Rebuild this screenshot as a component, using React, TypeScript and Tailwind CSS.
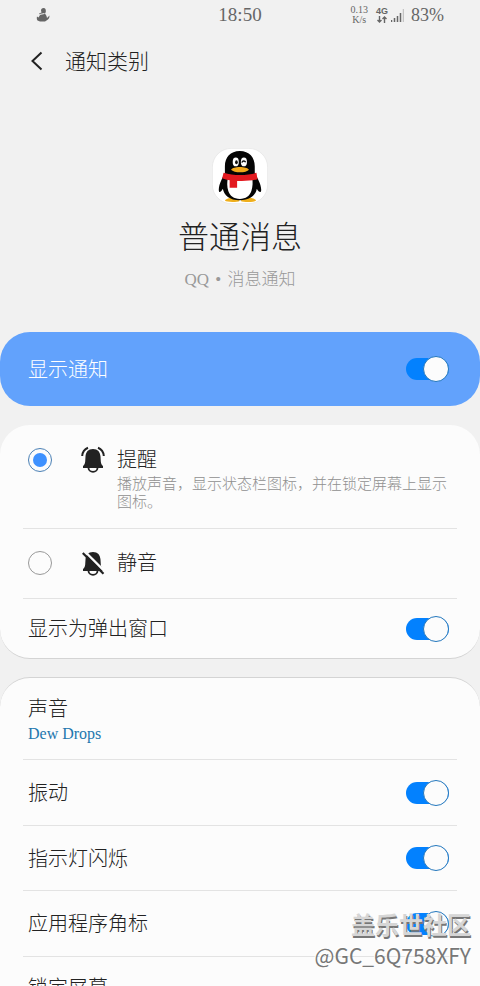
import { useId, useState } from "react";
import type { ReactNode } from "react";

function Toggle({ id }: { id: string }) {
  const [on, setOn] = useState(true);
  return (
    <input
      id={id}
      type="checkbox"
      role="switch"
      checked={on}
      onChange={() => setOn(!on)}
      className="flex h-[22px] w-[43px] shrink-0 appearance-none items-center justify-start rounded-full bg-[#b8b8b8] before:size-[26px] before:shrink-0 before:rounded-full before:border before:border-[#999] before:bg-[#fcfcfc] checked:justify-end checked:bg-[#0381fe] checked:before:border-[#2377bd]"
    />
  );
}

function SwitchRow({ label, className = "" }: { label: string; className?: string }) {
  const id = useId();
  return (
    <div className={`flex items-center justify-between px-[5px] pr-2 ${className}`}>
      <label htmlFor={id} className="pt-px text-xl leading-6">
        {label}
      </label>
      <Toggle id={id} />
    </div>
  );
}

function Radio({ id, checked, onChange }: { id: string; checked: boolean; onChange: () => void }) {
  return (
    <input
      id={id}
      type="radio"
      name="importance"
      checked={checked}
      onChange={onChange}
      className="grid size-6 shrink-0 appearance-none place-content-center rounded-full border border-[#999] before:size-[14px] before:rounded-full checked:border-[#4a80b5] checked:before:bg-[#3e91ff]"
    />
  );
}

function Card({ children, className = "" }: { children: ReactNode; className?: string }) {
  return (
    <section className={`rounded-[30px] border-[#d4d4d4] bg-[#fcfcfc] px-[23px] ${className}`}>
      {children}
    </section>
  );
}

const bellShape =
  "M12 2C7.200 2 4.800 5 4.500 9.500L4.200 14.500C4 17 3.200 18 2 19V21H22V19C20.800 18 20 17 19.800 14.500L19.500 9.500C19.200 5 16.800 2 12 2Z";

function BellRinging() {
  return (
    <svg viewBox="0 1 24 24" className="size-6 shrink-0 overflow-visible" aria-hidden="true">
      <path d={bellShape} fill="#222" />
      <path d="M7.500 21a4.500 3.800 0 0 0 9 0" fill="none" stroke="#222" strokeWidth="1.800" />
      <path
        d="M7 .8C3.500 2.200 1.500 5 1.200 9M17 .8C20.500 2.200 22.500 5 22.800 9"
        fill="none"
        stroke="#222"
        strokeWidth="2"
      />
    </svg>
  );
}

function BellOff() {
  return (
    <svg viewBox="0 1 24 24" className="size-6 shrink-0 overflow-visible" aria-hidden="true">
      <path d={bellShape} fill="#222" />
      <path d="M7.500 21a4.500 3.800 0 0 0 9 0" fill="none" stroke="#222" strokeWidth="1.800" />
      <path d="M3.800 1.500L24 21.700" stroke="#fcfcfc" strokeWidth="2.400" />
      <path d="M1.800 3L22.500 23.800" stroke="#222" strokeWidth="2.200" />
    </svg>
  );
}

function QQLogo() {
  return (
    <svg viewBox="0 0 165 165" className="size-14" role="img" aria-label="QQ">
      <rect x="1" y="1" width="163" height="163" rx="56" fill="#fff" stroke="#e3e3e3" strokeWidth="2" />
      <path d="M38 155c5-8 20-10 40-9l3 10c-4 4-38 5-43-1zM130 155c-5-8-20-10-40-9l-5 10c4 4 40 5 45-1z" fill="#efaf1c" />
      <path
        d="M82 9C54 9 38 28 38 54v19c-5 12-18 32-18 50 0 10 5 9 12-3 3 19 20 34 50 34s47-15 50-34c7 12 13 13 13 3 0-18-14-38-19-50V54C126 28 110 9 82 9z"
        fill="#050505"
      />
      <path d="M47 88h71c3 12 2 27-2 39-5 15-16 23-34 23s-29-8-34-23c-4-12-4-27-1-39z" fill="#fff" />
      <path d="M34 73c30 9 68 9 97 0l3 19c-17 5-40 6-60 5v20H52V95c-8-1-15-3-22-6z" fill="#e3191f" />
      <ellipse cx="70" cy="41" rx="9" ry="13" fill="#fff" />
      <ellipse cx="94" cy="41" rx="9" ry="13" fill="#fff" />
      <ellipse cx="72" cy="42" rx="4" ry="6" fill="#111" />
      <path d="M88 43c2-6 9-6 11-1" fill="none" stroke="#111" strokeWidth="4" />
      <path d="M56 64c6-11 46-11 53 0-8 10-44 10-53 0z" fill="#f2a91b" />
    </svg>
  );
}

function StatusBar() {
  return (
    <div className="grid h-[30px] grid-cols-3 items-center pr-9 pl-9 text-[#666]">
      <svg viewBox="0 0 14 14" className="size-[14px]" fill="#666" aria-hidden="true">
        <path d="M7.500 0C9.500 0 10 1.500 9.800 4L9 5.500 10.500 8 11 10l2.500-2.500C13.800 10 12 12 10.500 12.500L9 13.500H4L1.500 12.500C.5 11 .8 9.500 1 8.500L2.500 9.500 4 7 3 5.500 5.500 4.500 5 2.500C5 1 6 0 7.500 0z" />
        <path d="M3.500 6.500l5-1" stroke="#f1f1f1" strokeWidth="1" />
      </svg>
      <time className="text-center text-[19px] leading-6">18:50</time>
      <div className="flex items-center justify-end gap-[3px]">
        <span className="mr-[5px] flex flex-col items-center text-[10px] leading-[10px]">
          <span>0.13</span>
          <span>K/s</span>
        </span>
        <span className="flex flex-col items-center font-['Liberation_Sans'] text-[9px] leading-[9px] font-bold">
          4G
          <svg viewBox="0 0 10 7" className="h-[7px] w-[10px]" fill="none" stroke="#666" aria-hidden="true">
            <path d="M2.500 0v6M.5 4l2 2 2-2M7.500 7V1M5.500 3l2-2 2 2" strokeWidth="1.400" />
          </svg>
        </span>
        <svg viewBox="0 0 13 13" className="size-[13px]" aria-hidden="true">
          <path d="M.5 11v2M3.500 9v4M6.500 7v6M9.500 4v9" stroke="#666" strokeWidth="1.500" />
          <path d="M12.500 0v13" stroke="#c4c4c4" strokeWidth="1.500" />
        </svg>
        <span className="ml-1 text-[18px] leading-6">83%</span>
      </div>
    </div>
  );
}

export default function App() {
  const [mode, setMode] = useState("alert");
  return (
    <div className="relative h-screen overflow-hidden bg-[#f1f1f1] font-['Liberation_Serif','Noto_Sans_CJK_SC',serif] font-light text-[#222]">
      <StatusBar />
      <header className="flex h-[62px] items-center gap-5 pl-[29px]">
        <button type="button" aria-label="返回">
          <svg viewBox="0 0 16 20" className="h-5 w-4" fill="none" stroke="#222" strokeWidth="2" aria-hidden="true">
            <path d="M12.500 1.500L3.500 10l9 8.500" />
          </svg>
        </button>
        <h1 className="pt-px text-[21px] leading-6">通知类别</h1>
      </header>

      <main>
        <div className="flex flex-col items-center pt-14 pb-10">
          <QQLogo />
          <h2 className="mt-[14px] text-[31px] leading-10">普通消息</h2>
          <p className="mt-[10px] text-[17px] leading-6 text-[#999]">
            QQ<span className="mx-[2px]"> • </span>消息通知
          </p>
        </div>

        <section className="rounded-[30px] bg-[#62a2fc] px-[23px] text-white">
          <SwitchRow label="显示通知" className="h-[74px]" />
        </section>

        <Card className="mt-[19px] border-b">
          <div className="flex border-b border-[#e3e3e3] pt-[23px] pr-2 pb-[17px] pl-[5px]">
            <Radio id="alert" checked={mode === "alert"} onChange={() => setMode("alert")} />
            <label htmlFor="alert" className="ml-[29px] flex gap-3">
              <BellRinging />
              <span>
                <span className="block text-xl leading-6">提醒</span>
                <span className="mt-[3px] block text-[15px] leading-[18px] text-[#909090]">
                  播放声音，显示状态栏图标，并在锁定屏幕上显示图标。
                </span>
              </span>
            </label>
          </div>
          <div className="flex h-[70px] items-center border-b border-[#e3e3e3] pb-[2px] pl-[5px]">
            <Radio id="silent" checked={mode === "silent"} onChange={() => setMode("silent")} />
            <label htmlFor="silent" className="ml-[29px] flex items-center gap-3 text-xl leading-6">
              <BellOff />
              静音
            </label>
          </div>
          <SwitchRow label="显示为弹出窗口" className="h-[59px]" />
        </Card>

        <Card className="mt-[18px] border-t">
          <button type="button" className="block w-full border-b border-[#e3e3e3] pt-[19px] pb-[13px] pl-[5px] text-left">
            <span className="block text-xl leading-6">声音</span>
            <span className="mt-px block text-base leading-6 text-[#2377ae]">Dew Drops</span>
          </button>
          <SwitchRow label="振动" className="h-[66px] border-b border-[#e3e3e3]" />
          <SwitchRow label="指示灯闪烁" className="h-[65px] border-b border-[#e3e3e3]" />
          <SwitchRow label="应用程序角标" className="h-[66px] border-b border-[#e3e3e3]" />
          <button type="button" className="block w-full pt-[19px] pb-[22px] pl-[5px] text-left text-xl leading-6">
            锁定屏幕
          </button>
        </Card>
      </main>

      <div className="pointer-events-none absolute right-[9px] bottom-[18px] text-right font-['Noto_Sans_CJK_SC',sans-serif] font-normal text-[#777]">
        <p className="text-2xl leading-9 font-bold text-[#d6d6d6] [text-shadow:1px_2px_0_#777]">盖乐世社区</p>
        <p className="text-[21px] leading-[26px] [text-shadow:-1px_-1px_0_#fff]">@GC_6Q758XFY</p>
      </div>
    </div>
  );
}
